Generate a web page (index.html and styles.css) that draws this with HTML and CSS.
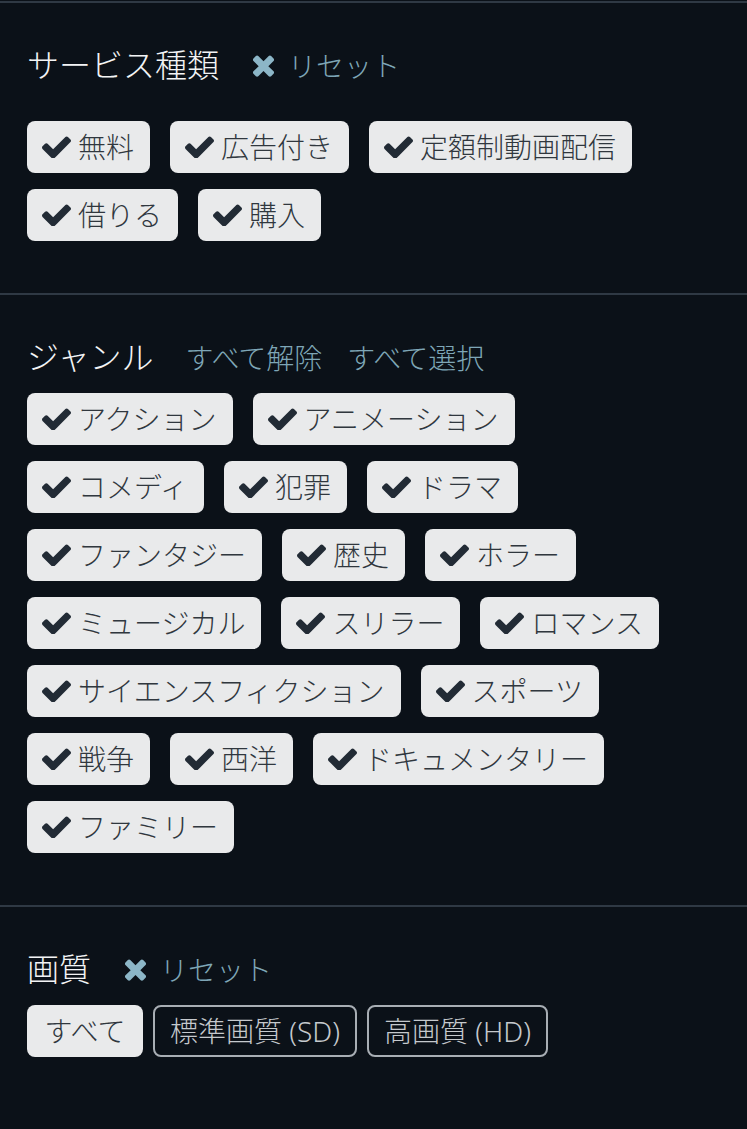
FILE: index.html
```html
<!DOCTYPE html>
<html lang="ja">
<head>
    <meta charset="UTF-8">
    <meta name="viewport" content="width=device-width, initial-scale=1.0">
    <title>絞り込み</title>
    <link rel="stylesheet" href="styles.css">
</head>
<body>
    <div class="filters">
        <!-- サービス種類 -->
        <section class="filter">
            <div class="filter-head">
                <h2 class="filter-title">サービス種類</h2>
                <a class="filter-link" href="#"><svg class="icon-x" viewBox="0 0 1408 1792"><path d="M1298 1322q0 40-28 68l-136 136q-28 28-68 28t-68-28l-294-294-294 294q-28 28-68 28t-68-28l-136-136q-28-28-28-68t28-68l294-294-294-294q-28-28-28-68t28-68l136-136q28-28 68-28t68 28l294 294 294-294q28-28 68-28t68 28l136 136q28 28 28 68t-28 68l-294 294 294 294q28 28 28 68z"/></svg>リセット</a>
            </div>
            <div class="chips chips-wide">
                <button class="chip"><svg class="icon-check" viewBox="121 330 1550 1130"><path d="M1671 566q0 40-28 68l-724 724-136 136q-28 28-68 28t-68-28l-136-136-362-362q-28-28-28-68t28-68l136-136q28-28 68-28t68 28l294 295 656-657q28-28 68-28t68 28l136 136q28 28 28 68z"/></svg>無料</button>
                <button class="chip"><svg class="icon-check" viewBox="121 330 1550 1130"><path d="M1671 566q0 40-28 68l-724 724-136 136q-28 28-68 28t-68-28l-136-136-362-362q-28-28-28-68t28-68l136-136q28-28 68-28t68 28l294 295 656-657q28-28 68-28t68 28l136 136q28 28 28 68z"/></svg>広告付き</button>
                <button class="chip"><svg class="icon-check" viewBox="121 330 1550 1130"><path d="M1671 566q0 40-28 68l-724 724-136 136q-28 28-68 28t-68-28l-136-136-362-362q-28-28-28-68t28-68l136-136q28-28 68-28t68 28l294 295 656-657q28-28 68-28t68 28l136 136q28 28 28 68z"/></svg>定額制動画配信</button>
                <button class="chip"><svg class="icon-check" viewBox="121 330 1550 1130"><path d="M1671 566q0 40-28 68l-724 724-136 136q-28 28-68 28t-68-28l-136-136-362-362q-28-28-28-68t28-68l136-136q28-28 68-28t68 28l294 295 656-657q28-28 68-28t68 28l136 136q28 28 28 68z"/></svg>借りる</button>
                <button class="chip"><svg class="icon-check" viewBox="121 330 1550 1130"><path d="M1671 566q0 40-28 68l-724 724-136 136q-28 28-68 28t-68-28l-136-136-362-362q-28-28-28-68t28-68l136-136q28-28 68-28t68 28l294 295 656-657q28-28 68-28t68 28l136 136q28 28 28 68z"/></svg>購入</button>
            </div>
        </section>

        <!-- ジャンル -->
        <section class="filter">
            <div class="filter-head">
                <h2 class="filter-title">ジャンル</h2>
                <a class="filter-link" href="#">すべて解除</a>
                <a class="filter-link" href="#">すべて選択</a>
            </div>
            <div class="chips" id="genres"></div>
        </section>

        <!-- 画質 -->
        <section class="filter">
            <div class="filter-head">
                <h2 class="filter-title">画質</h2>
                <a class="filter-link" href="#"><svg class="icon-x" viewBox="0 0 1408 1792"><path d="M1298 1322q0 40-28 68l-136 136q-28 28-68 28t-68-28l-294-294-294 294q-28 28-68 28t-68-28l-136-136q-28-28-28-68t28-68l294-294-294-294q-28-28-28-68t28-68l136-136q28-28 68-28t68 28l294 294 294-294q28-28 68-28t68 28l136 136q28 28 28 68t-28 68l-294 294 294 294q28 28 28 68z"/></svg>リセット</a>
            </div>
            <div class="chips chips-tight">
                <button class="chip chip-plain">すべて</button>
                <button class="chip chip-off">標準画質 (SD)</button>
                <button class="chip chip-off">高画質 (HD)</button>
            </div>
        </section>
    </div>

    <script>
        const genres = [
            'アクション', 'アニメーション', 'コメディ', '犯罪', 'ドラマ',
            'ファンタジー', '歴史', 'ホラー', 'ミュージカル', 'スリラー', 'ロマンス',
            'サイエンスフィクション', 'スポーツ', '戦争', '西洋', 'ドキュメンタリー', 'ファミリー'
        ];
        const check = document.querySelector('.icon-check').outerHTML;
        const list = document.getElementById('genres');
        genres.forEach(name => {
            const chip = document.createElement('button');
            chip.className = 'chip';
            chip.innerHTML = check + name;
            list.appendChild(chip);
        });
    </script>
</body>
</html>
```

FILE: styles.css
```css
/* 絞り込みパネル */
body {
    margin: 0;
    background-color: #0b1118;
    font-family: "Noto Sans", "Noto Sans CJK JP", sans-serif;
    font-weight: 300;
    color: #f3f4f5;
}
.filters {
    margin-top: 1px;
    border-top: 2px solid #2f3944;
}
.filter {
    padding: 38px 27px 52px;
    border-bottom: 2px solid #2f3944;
}
.filter:last-child {
    border-bottom: none;
}
.filter-head {
    display: flex;
    align-items: center;
    height: 48px;
}
.filter-title {
    margin: 0 32px 0 0;
    font-size: 32px;
    font-weight: 300;
    line-height: 48px;
}
.filter-link {
    display: flex;
    align-items: center;
    margin-right: 25px;
    color: #7ea6b6;
    font-size: 28px;
    text-decoration: none;
}
.icon-x {
    width: 25px;
    height: 32px;
    margin-right: 12px;
    fill: #8cb6c7;
}
.chips {
    display: flex;
    flex-wrap: wrap;
    row-gap: 16px;
    margin-top: 12px;
}
.chips-wide {
    margin-top: 32px;
}
.chip {
    display: flex;
    align-items: center;
    height: 52px;
    margin-right: 20px;
    padding: 0 16px;
    background-color: #e9eaeb;
    border: none;
    border-radius: 8px;
    color: #30373e;
    font-family: inherit;
    font-size: 28px;
    font-weight: 300;
    line-height: 42px;
    cursor: pointer;
}
.chips-tight .chip {
    margin-right: 10px;
}
.chip .icon-check {
    width: 29px;
    height: 22px;
    margin: 0 7px 0 -1px;
    fill: #222b35;
}
.chip-plain {
    padding: 0 17.5px;
}
.chip-off {
    background-color: transparent;
    border: 2px solid #a8aeb4;
    color: #c5c9cd;
    padding: 0 15px;
}
```
